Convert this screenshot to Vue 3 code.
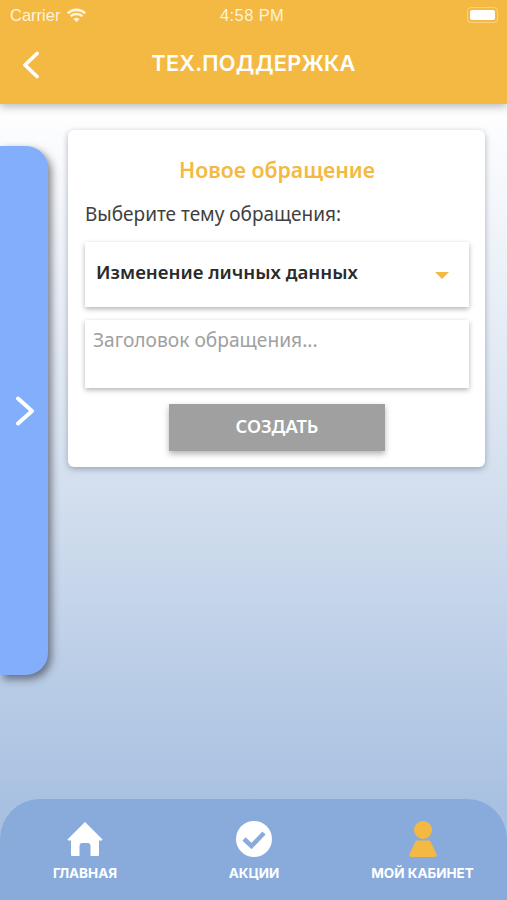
<template>
  <div class="screen">
    <header class="header">
      <div class="status-bar">
        <div class="status-left">
          <span>Carrier</span>
          <svg class="wifi" width="21" height="15" viewBox="0 0 21 15">
            <path d="M10.500 3.200c3 0 5.700 1.100 7.800 3l1.700-1.800C17.500 2 14.200.6 10.500.6S3.500 2 1 4.400l1.700 1.800c2.100-1.900 4.800-3 7.800-3z" fill="currentColor"/>
            <path d="M10.500 7.300c1.900 0 3.600.7 4.900 1.900l1.700-1.800c-1.800-1.600-4.100-2.600-6.600-2.600s-4.800 1-6.600 2.600l1.700 1.800c1.300-1.200 3-1.900 4.900-1.900z" fill="currentColor"/>
            <path d="M10.500 9.800c-1.200 0-2.200.4-3 1.100l3 3.400 3-3.400c-.8-.7-1.800-1.100-3-1.100z" fill="currentColor"/>
          </svg>
        </div>
        <span class="status-time">4:58 PM</span>
        <div class="battery"><div class="battery-fill"></div></div>
      </div>
      <div class="nav-bar">
        <svg class="back" width="20" height="28" viewBox="0 0 20 28">
          <path d="M16 2.500 4 14l12 11.500" fill="none" stroke="#fff" stroke-width="3.800" stroke-linecap="round" stroke-linejoin="round"/>
        </svg>
        <h1 class="nav-title">ТЕХ.ПОДДЕРЖКА</h1>
      </div>
    </header>

    <main class="content">
      <div class="side-tab">
        <svg width="20" height="30" viewBox="0 0 20 30">
          <path d="M3 2.500 17 15 3 27.500" fill="none" stroke="#fff" stroke-width="4" stroke-linecap="round" stroke-linejoin="round"/>
        </svg>
      </div>

      <section class="card">
        <h2 class="card-title">Новое обращение</h2>
        <p class="card-label">Выберите тему обращения:</p>
        <div class="select">
          <span>{{ topic }}</span>
          <div class="caret"></div>
        </div>
        <div class="field">Заголовок обращения...</div>
        <button class="submit">СОЗДАТЬ</button>
      </section>
    </main>

    <nav class="tabbar">
      <div v-for="tab in tabs" :key="tab.label" class="tab">
        <svg v-if="tab.icon === 'home'" width="36" height="36" viewBox="0 0 36 36">
          <path fill-rule="evenodd" d="M18 1 35.500 18.500l-.6 1H32V34a1 1 0 0 1-1 1h-7.500V25a3 3 0 0 0-3-3h-5a3 3 0 0 0-3 3v10H5a1 1 0 0 1-1-1V19.500H1.100l-.6-1z" fill="#fff"/>
        </svg>
        <svg v-else-if="tab.icon === 'check'" width="36" height="36" viewBox="0 0 36 36">
          <circle cx="18" cy="18" r="18" fill="#fff"/>
          <path d="M8 18 15.500 25 28 12" fill="none" stroke="#88abdc" stroke-width="4.500"/>
        </svg>
        <svg v-else width="28" height="36" viewBox="0 0 28 36">
          <circle cx="14" cy="9" r="9" fill="#f4b942"/>
          <path d="M8.500 19.500h11c1 0 1.800.5 2.200 1.500L27.500 33c.5 1.500-.3 3-1.900 3H2.400c-1.600 0-2.400-1.500-1.900-3L6.300 21c.4-1 1.200-1.500 2.200-1.500z" fill="#f4b942"/>
        </svg>
        <span class="tab-label">{{ tab.label }}</span>
      </div>
    </nav>
  </div>
</template>

<script setup>
import { ref } from 'vue'

const topic = ref('Изменение личных данных')

const tabs = [
  { label: 'ГЛАВНАЯ', icon: 'home' },
  { label: 'АКЦИИ', icon: 'check' },
  { label: 'МОЙ КАБИНЕТ', icon: 'user' }
]
</script>

<style>
html, body {
  margin: 0;
  padding: 0;
}
</style>

<style scoped>
.screen {
  width: 507px;
  height: 900px;
  display: flex;
  flex-direction: column;
  overflow: hidden;
  background: linear-gradient(180deg, #ffffff 100px, #d2deee 500px, #a9c1e1 800px);
  font-family: "Noto Sans", "Open Sans", sans-serif;
}

.header {
  height: 104px;
  flex-shrink: 0;
  background: #f4b942;
  color: #fff;
  box-shadow: 0 3px 8px rgba(60, 60, 60, 0.35);
  position: relative;
  z-index: 2;
}

.status-bar {
  height: 30px;
  display: flex;
  align-items: center;
  justify-content: space-between;
  padding: 0 9px 0 10px;
  position: relative;
  font-family: "Liberation Sans", sans-serif;
  font-size: 16.500px;
  color: #fdf3dc;
}

.status-left {
  display: flex;
  align-items: center;
  gap: 6px;
}

.status-time {
  position: absolute;
  left: 220px;
  letter-spacing: 0.4px;
}

.battery {
  width: 31px;
  height: 16px;
  box-sizing: border-box;
  border: 1px solid rgba(255, 255, 255, 0.35);
  border-radius: 4px;
  padding: 2px;
}

.battery-fill {
  width: 100%;
  height: 100%;
  background: #fff;
  border-radius: 2px;
}

.nav-bar {
  height: 66px;
  display: flex;
  align-items: center;
  justify-content: center;
  position: relative;
}

.back {
  position: absolute;
  left: 21px;
  top: 21px;
}

.nav-title {
  margin: 0;
  font-family: "Inter", "Roboto", sans-serif;
  font-size: 21.800px;
  font-weight: 600;
  letter-spacing: 0.2px;
  color: #fff;
}

.content {
  flex: 1;
  display: flex;
  align-items: flex-start;
  gap: 20px;
  padding-top: 26px;
}

.side-tab {
  width: 48px;
  height: 529px;
  margin-top: 16px;
  flex-shrink: 0;
  display: flex;
  align-items: center;
  justify-content: flex-end;
  padding-right: 13px;
  box-sizing: border-box;
  background: #83aefb;
  border-radius: 0 22px 22px 0;
  box-shadow: 3px 4px 8px rgba(40, 40, 50, 0.6);
}

.card {
  width: 417px;
  height: 337px;
  box-sizing: border-box;
  padding: 25px 16px 0 17px;
  display: flex;
  flex-direction: column;
  background: #fff;
  border-radius: 6px;
  box-shadow: 0 2px 6px rgba(60, 70, 90, 0.4);
}

.card-title {
  margin: 0;
  font-size: 21.300px;
  line-height: 30px;
  font-weight: 600;
  text-align: center;
  color: #f4b942;
}

.card-label {
  margin: 16px 0 0;
  font-size: 19px;
  line-height: 26px;
  color: #3f3f3f;
}

.select {
  height: 65px;
  box-sizing: border-box;
  margin-top: 15px;
  padding: 0 20px 6px 11px;
  display: flex;
  align-items: center;
  justify-content: space-between;
  background: #fff;
  font-size: 18.700px;
  font-weight: 600;
  color: #2b2b2b;
  box-shadow: 0 2px 5px rgba(0, 0, 0, 0.3);
}

.caret {
  width: 0;
  height: 0;
  margin-top: 8px;
  border-left: 7px solid transparent;
  border-right: 7px solid transparent;
  border-top: 7px solid #f4b942;
}

.field {
  height: 68px;
  margin-top: 13px;
  padding: 7px 8px;
  box-sizing: border-box;
  background: #fff;
  font-size: 19.200px;
  line-height: 26px;
  color: #a0a0a0;
  box-shadow: 0 2px 5px rgba(0, 0, 0, 0.3);
}

.submit {
  width: 216px;
  height: 47px;
  margin: 16px auto 0;
  border: none;
  padding: 0 0 4px;
  background: #a0a0a0;
  font-family: inherit;
  font-size: 18.300px;
  font-weight: 600;
  color: #fff;
  box-shadow: 0 3px 6px rgba(0, 0, 0, 0.3);
}

.tabbar {
  height: 101px;
  flex-shrink: 0;
  display: grid;
  grid-template-columns: 170px 168px 169px;
  background: #88abdc;
  border-radius: 40px 40px 0 0;
}

.tab {
  display: flex;
  flex-direction: column;
  align-items: center;
  padding-top: 22px;
  box-sizing: border-box;
}

.tab svg {
  height: 36px;
  display: block;
}

.tab-label {
  margin-top: 7px;
  font-family: "Inter", "Roboto", sans-serif;
  font-size: 13.500px;
  line-height: 18px;
  font-weight: 700;
  color: #fff;
}
</style>
